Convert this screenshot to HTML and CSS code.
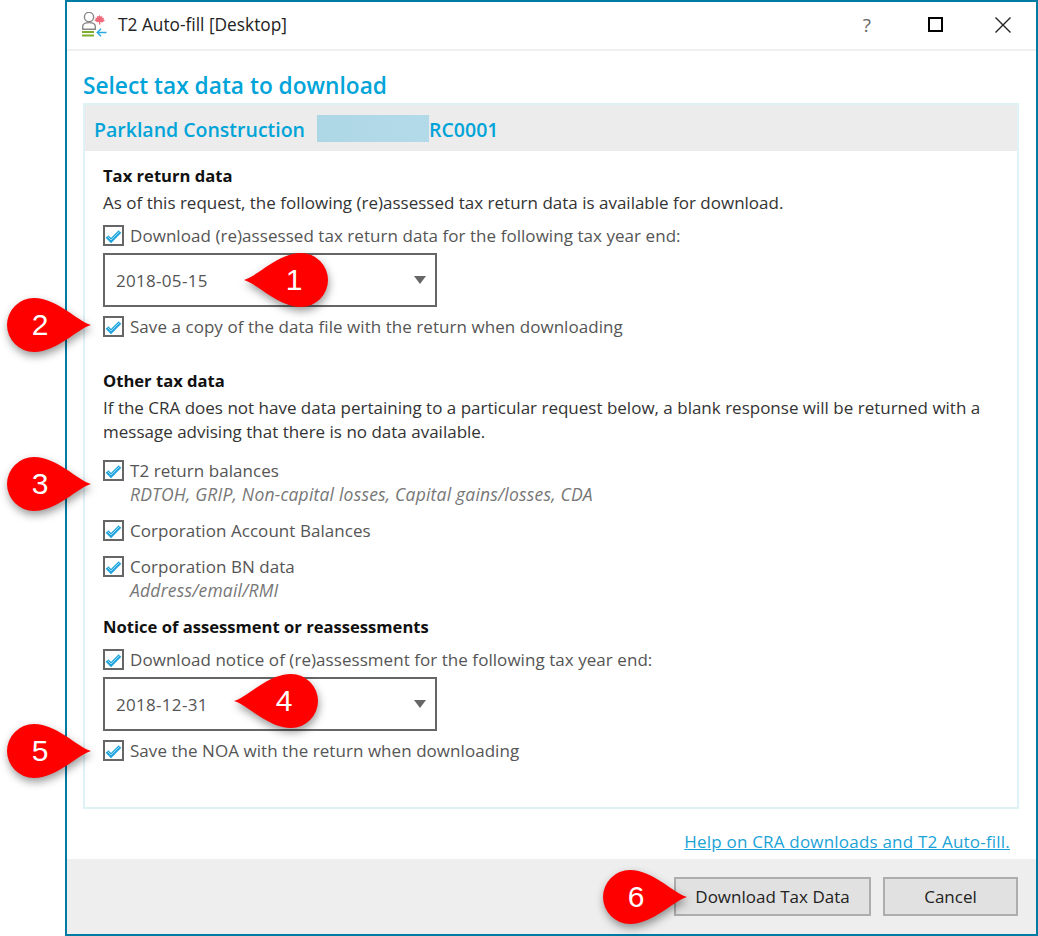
FILE: index.html
```html
<!DOCTYPE html>
<html lang="en">
<head>
<meta charset="utf-8">
<title>T2 Auto-fill [Desktop]</title>
<link rel="stylesheet" href="styles.css">
</head>
<body>
<svg class="defs" width="0" height="0" aria-hidden="true">
  <symbol id="tick" viewBox="0 0 17 17">
    <path d="M2 9.500l4 4L15 4.500" fill="none" stroke="#1fa4dc" stroke-width="3.800"/>
    <path d="M2.500 9.500l3.500 3.500L14.500 4.500" fill="none" stroke="#bfe8f7" stroke-width="0.800"/>
  </symbol>
  <symbol id="drop" viewBox="0 0 84 54">
    <path d="M0 27C14 23 34 0 57 0a27 27 0 0 1 0 54C34 54 14 31 0 27z"/>
  </symbol>
</svg>
<div class="window">
  <header class="titlebar">
    <svg class="app-icon" width="28" height="26" viewBox="0 0 28 26">
      <circle cx="8" cy="5" r="4.600" fill="#fff" stroke="#888" stroke-width="1.400"/>
      <path d="M1.700 17.300v-2.800c0-2.500 2.300-3.900 6.300-3.900s6.300 1.400 6.300 3.900v2.800z" fill="#fff" stroke="#888" stroke-width="1.400"/>
      <path d="M18.500 3l1.300 1.700 1.600-.6-.3 1.900 1.900-.3-.5 1.700 1.500 1-3 2-1.700-.4v2.500h-1.300V9.900l-1.700.4-3-2 1.500-1-.5-1.700 1.900.3-.3-1.900 1.600.6z" fill="#f0697a"/>
      <path d="M1 20h12M1 23.500h12" stroke="#7fae2e" stroke-width="1.800"/>
      <path d="M25.500 20.500H16.500M20 16.800l-3.700 3.700 3.700 3.700" fill="none" stroke="#2ba9e0" stroke-width="1.500"/>
    </svg>
    <span class="title">T2 Auto-fill [Desktop]</span>
    <span class="help">?</span>
    <span class="maximize"></span>
    <svg class="close" width="16" height="16" viewBox="0 0 16 16"><path d="M.5.5l15 15M15.500.5l-15 15" stroke="#222" stroke-width="1.400"/></svg>
  </header>

  <main class="content">
    <h1 class="heading">Select tax data to download</h1>
    <section class="panel">
      <div class="panel-head">
        <span class="company">Parkland Construction</span>
        <span class="redacted"></span>
        <span class="account">RC0001</span>
      </div>
      <div class="panel-body">
        <h2 class="section-title">Tax return data</h2>
        <p class="text tight">As of this request, the following (re)assessed tax return data is available for download.</p>
        <div class="check-row first-row"><span class="box"><svg class="tick"><use href="#tick"/></svg></span><span>Download (re)assessed tax return data for the following tax year end:</span></div>
        <div class="select"><span>2018-05-15</span><i class="caret"></i></div>
        <div class="check-row after-select"><span class="box"><svg class="tick"><use href="#tick"/></svg></span><span>Save a copy of the data file with the return when downloading</span></div>

        <h2 class="section-title other">Other tax data</h2>
        <p class="text tight">If the CRA does not have data pertaining to a particular request below, a blank response will be returned with a message advising that there is no data available.</p>
        <div class="check-row t2"><span class="box"><svg class="tick"><use href="#tick"/></svg></span><span>T2 return balances</span></div>
        <p class="sub">RDTOH, GRIP, Non-capital losses, Capital gains/losses, CDA</p>
        <div class="check-row spaced"><span class="box"><svg class="tick"><use href="#tick"/></svg></span><span>Corporation Account Balances</span></div>
        <div class="check-row spaced"><span class="box"><svg class="tick"><use href="#tick"/></svg></span><span>Corporation BN data</span></div>
        <p class="sub">Address/email/RMI</p>

        <h2 class="section-title notice">Notice of assessment or reassessments</h2>
        <div class="check-row first-row"><span class="box"><svg class="tick"><use href="#tick"/></svg></span><span>Download notice of (re)assessment for the following tax year end:</span></div>
        <div class="select"><span>2018-12-31</span><i class="caret"></i></div>
        <div class="check-row after-select"><span class="box"><svg class="tick"><use href="#tick"/></svg></span><span>Save the NOA with the return when downloading</span></div>
      </div>
    </section>
    <div class="help-row"><a class="help-link" href="#">Help on CRA downloads and T2 Auto-fill.</a></div>
  </main>

  <footer class="footer">
    <button class="btn btn-primary">Download Tax Data</button>
    <button class="btn btn-cancel">Cancel</button>
  </footer>
</div>

<div class="callout c1"><svg><use href="#drop"/></svg><span>1</span></div>
<div class="callout right c2"><svg><use href="#drop"/></svg><span>2</span></div>
<div class="callout right c3"><svg><use href="#drop"/></svg><span>3</span></div>
<div class="callout c4"><svg><use href="#drop"/></svg><span>4</span></div>
<div class="callout right c5"><svg><use href="#drop"/></svg><span>5</span></div>
<div class="callout right c6"><svg><use href="#drop"/></svg><span>6</span></div>
</body>
</html>
```
FILE: styles.css
```css
* { box-sizing: border-box; }
html, body { margin: 0; padding: 0; background: #fff; }
body {
  position: relative;
  width: 1038px;
  height: 936px;
  overflow: hidden;
  font-family: "Open Sans", "Noto Sans", sans-serif;
  font-size: 17px;
  color: #555;
}
.defs { position: absolute; }
.window {
  margin-left: 65px;
  width: 973px;
  height: 936px;
  border: 2px solid #007ba3;
  display: flex;
  flex-direction: column;
  background: #fff;
}
.titlebar {
  height: 49px;
  flex: none;
  display: flex;
  align-items: center;
  border-bottom: 2px solid #f0f0f0;
  padding: 0 0 2px 14px;
}
.app-icon { flex: none; }
.title { margin-left: 9px; color: #222; font-size: 17.300px; }
.help { margin-left: auto; margin-right: 2px; color: #666; font-size: 19px; }
.maximize { width: 15px; height: 15px; border: 2px solid #000; margin-left: 55px; }
.close { margin-left: 52px; margin-right: 25px; }
.content { flex: 1; padding: 20px 17px 0 16px; display: flex; flex-direction: column; }
.heading {
  margin: 0;
  font-size: 22.700px;
  line-height: 30px;
  font-weight: 600;
  color: #00a4d8;
}
.panel {
  margin-top: 2px;
  width: 936px;
  height: 706px;
  border: 2px solid #dff2f8;
}
.panel-head {
  height: 46px;
  background: #ececec;
  display: flex;
  align-items: center;
  padding-left: 9px;
  font-size: 19.500px;
  font-weight: 600;
  color: #00a4d8;
}
.company, .account { padding-top: 2px; }
.redacted { width: 112px; height: 27px; margin-left: 12px; background: linear-gradient(90deg, #aed7e6, #b3dae8); }
.panel-body { padding: 13px 18px 0; }
.section-title { margin: 0; font-size: 16.600px; line-height: 24px; font-weight: 700; color: #111; }
.text, .sub { margin: 0; line-height: 24px; }
.text { color: #333; }
.tight { margin-top: 3px; }
.other { margin-top: 31px; }
.notice { margin-top: 13px; }
.check-row { display: flex; align-items: center; height: 24px; letter-spacing: 0.050px; }
.first-row { margin-top: 8px; }
.after-select { margin-top: 7px; }
.t2 { margin-top: 14px; }
.spaced { margin-top: 12px; }
.box {
  flex: none;
  width: 21px;
  height: 21px;
  margin-right: 6px;
  border: 2px solid #666;
  background: #fff;
  display: flex;
  align-items: center;
  justify-content: center;
}
.tick { width: 17px; height: 17px; }
.sub { padding-left: 27px; font-style: italic; color: #777; font-size: 17.500px; letter-spacing: 0.200px; }
.select {
  margin-top: 6px;
  width: 334px;
  height: 54px;
  border: 2px solid #666;
  display: flex;
  align-items: center;
  justify-content: space-between;
  padding: 0 9px 0 11px;
  letter-spacing: 0.300px;
}
.caret { width: 0; height: 0; border: 6px solid transparent; border-top: 8px solid #666; border-bottom: 0; }
.help-row { margin-top: 21px; padding-right: 9px; text-align: right; line-height: 24px; }
.help-link { color: #1ba3d6; letter-spacing: 0.200px; }
.footer {
  height: 75px;
  flex: none;
  background: #eee;
  display: flex;
  justify-content: flex-end;
  align-items: flex-start;
  gap: 12px;
  padding: 18px 18px 0 0;
}
.btn {
  height: 39px;
  background: #e1e1e1;
  border: 2px solid #adadad;
  font: inherit;
  color: #222;
  padding: 0;
}
.btn-primary { width: 197px; }
.btn-cancel { width: 135px; }
.callout { position: absolute; width: 84px; height: 54px; }
.callout svg { display: block; width: 100%; height: 100%; fill: #fe0000; overflow: visible; filter: drop-shadow(1px 4px 4px rgba(0,0,0,.4)); }
.callout span {
  position: absolute;
  top: 0;
  left: 23px;
  width: 54px;
  height: 54px;
  line-height: 54px;
  text-align: center;
  font-family: "Liberation Sans", sans-serif;
  font-size: 30px;
  color: #fff;
}
.right svg { transform: scaleX(-1); filter: drop-shadow(-1px 4px 4px rgba(0,0,0,.4)); }
.right span { left: 6px; }
.c1 { left: 244px; top: 253px; }
.c2 { left: 7px; top: 298px; }
.c3 { left: 7px; top: 457px; }
.c4 { left: 234px; top: 674px; }
.c5 { left: 7px; top: 724px; }
.c6 { left: 603px; top: 870px; }
```
